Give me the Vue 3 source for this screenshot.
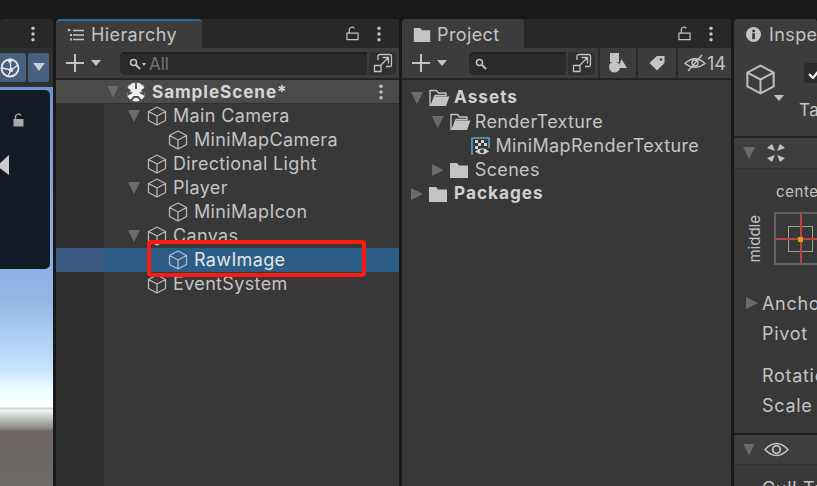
<script setup>
const hierarchy = [
  { name: 'Main Camera', depth: 1, open: true },
  { name: 'MiniMapCamera', depth: 2 },
  { name: 'Directional Light', depth: 1 },
  { name: 'Player', depth: 1, open: true },
  { name: 'MiniMapIcon', depth: 2 },
  { name: 'Canvas', depth: 1, open: true },
  { name: 'RawImage', depth: 2, selected: true },
  { name: 'EventSystem', depth: 1 },
]
const assets = [
  { name: 'Assets', depth: 0, icon: 'open', arrow: 'down', bold: true },
  { name: 'RenderTexture', depth: 1, icon: 'open', arrow: 'down' },
  { name: 'MiniMapRenderTexture', depth: 2, icon: 'tex' },
  { name: 'Scenes', depth: 1, icon: 'closed', arrow: 'right' },
  { name: 'Packages', depth: 0, icon: 'closed', arrow: 'right', bold: true },
]
const indent = (d) => ({ paddingLeft: `${51 + d * 21}px` })
const assetIndent = (d) => ({ paddingLeft: `${9 + d * 20.75}px` })
</script>

<template>
  <div class="editor">
    <svg class="defs" width="0" height="0">
      <symbol id="cube" viewBox="0 0 20 20">
        <path d="M10 1 18.5 5.5V14.5L10 19 1.5 14.5V5.5ZM1.5 5.5 10 10 18.5 5.5M10 10V19" fill="none" stroke="currentColor" stroke-width="1.3" stroke-linejoin="round" />
      </symbol>
      <symbol id="lock" viewBox="0 0 14 16">
        <path d="M3.5 7V4A3 3 0 0 1 9 2.5M1 7.5H13V14.5H1Z" fill="none" stroke="currentColor" stroke-width="1.3" />
      </symbol>
      <symbol id="dots" viewBox="0 0 4 16">
        <circle cx="2" cy="2.2" r="1.7" fill="currentColor" />
        <circle cx="2" cy="8" r="1.7" fill="currentColor" />
        <circle cx="2" cy="13.8" r="1.7" fill="currentColor" />
      </symbol>
      <symbol id="plus" viewBox="0 0 36 18">
        <path d="M9 0V18M0 9H18" fill="none" stroke="currentColor" stroke-width="2" />
        <path d="M25 6H35L30 12Z" fill="currentColor" />
      </symbol>
      <symbol id="mag" viewBox="0 0 12 12">
        <circle cx="4.5" cy="4.5" r="3" fill="none" stroke="currentColor" stroke-width="1.5" />
        <path d="M7 7 11 11" stroke="currentColor" stroke-width="2" />
      </symbol>
      <symbol id="scenevis" viewBox="0 0 20 20">
        <path d="M5 7V3A1.5 1.5 0 0 1 6.500 1.500H17A1.500 1.500 0 0 1 18.500 3V12A1.500 1.500 0 0 1 17 13.500H13M1.500 12.500H8V18.500H1.500ZM8 12 15 5M9.500 4.500H15.500V10.500" fill="none" stroke="currentColor" stroke-width="1.3" />
      </symbol>
      <symbol id="folderOpen" viewBox="0 0 21 18">
        <path d="M1 16.500V1.500H7.500L9.500 4H17V6.500H6L2.500 16Z" fill="none" stroke="currentColor" stroke-width="1.400" stroke-linejoin="round" />
        <path d="M5.500 7.500H20.500L17 17H1.500Z" fill="currentColor" />
      </symbol>
      <symbol id="folderClosed" viewBox="0 0 18 16">
        <path d="M0 1H7L9 3.500H18V16H0Z" fill="currentColor" />
      </symbol>
    </svg>

    <section class="scene">
      <header class="tabbar scene-tabbar">
        <svg class="dots"><use href="#dots" /></svg>
      </header>
      <div class="toolbar scene-toolbar">
        <span class="gizmo">
          <svg width="20" height="22" viewBox="0 0 20 22">
            <circle cx="10" cy="11" r="8.500" fill="none" stroke="#e6e6e6" stroke-width="1.800" />
            <path d="M2 11 11 13 18 8M10 3 11 13 8 19" fill="none" stroke="#e6e6e6" stroke-width="1.300" />
            <circle cx="10" cy="3.500" r="2.300" fill="#e6e6e6" />
            <circle cx="11" cy="13" r="2.200" fill="#e6e6e6" />
          </svg>
        </span>
        <span class="gizmo-arrow"></span>
      </div>
      <div class="view">
        <div class="minimap">
          <svg class="map-lock" width="11" height="14" viewBox="0 0 11 14">
            <path d="M2.500 6V3.500A3 3 0 0 1 8 2.500" fill="none" stroke="#a8a8a8" stroke-width="1.400" />
            <rect x="0.500" y="6" width="10" height="7.500" fill="#a8a8a8" />
          </svg>
          <span class="map-cone"></span>
        </div>
      </div>
    </section>

    <section class="hierarchy">
      <header class="tabbar">
        <div class="tab tab-active">
          <svg width="16" height="13" viewBox="0 0 16 13">
            <path d="M5 2.500H16M5 7H16M5 11.500H16" stroke="#c4c4c4" stroke-width="1.300" />
            <rect x="0" y="1" width="2.200" height="2.200" fill="#c4c4c4" />
            <rect x="2" y="6" width="2" height="2" fill="#c4c4c4" />
            <rect x="2" y="10.500" width="2" height="2" fill="#c4c4c4" />
          </svg>
          <span>Hierarchy</span>
        </div>
        <div class="tab-actions">
          <svg class="lock"><use href="#lock" /></svg>
          <svg class="dots"><use href="#dots" /></svg>
        </div>
      </header>
      <div class="toolbar">
        <svg class="plus"><use href="#plus" /></svg>
        <div class="search search-wide">
          <svg class="mag"><use href="#mag" /></svg>
          <i class="mag-caret"></i>
          <span>All</span>
        </div>
        <button class="visbtn"><svg width="20" height="20"><use href="#scenevis" /></svg></button>
      </div>
      <div class="tree">
        <div class="gutter"></div>
        <div class="scene-row">
          <span class="arrow down scene-arrow"></span>
          <svg class="unity" width="20" height="20" viewBox="0 0 20 20">
            <circle cx="10" cy="10" r="9.500" fill="#f0f0f0" />
            <path d="M10 0V7M1 13 6 10.500M19 13 14 10.500M5 19 8 15H12L15 19" fill="none" stroke="#4a4a4a" stroke-width="1.800" />
            <path d="M0 5 5 8 3 12 0 11ZM20 5 15 8 17 12 20 11Z" fill="#4a4a4a" />
          </svg>
          <span class="scene-name">SampleScene*</span>
          <svg class="dots scene-dots"><use href="#dots" /></svg>
        </div>
        <div
          v-for="item in hierarchy"
          :key="item.name"
          class="row"
          :class="{ selected: item.selected }"
          :style="indent(item.depth)"
        >
          <span class="arrow" :class="{ down: item.open }"></span>
          <svg class="cube"><use href="#cube" /></svg>
          <span class="label">{{ item.name }}</span>
        </div>
        <div class="highlight"></div>
      </div>
    </section>

    <section class="project">
      <header class="tabbar">
        <div class="tab project-tab">
          <svg width="18" height="15" viewBox="0 0 18 16"><use href="#folderClosed" /></svg>
          <span>Project</span>
        </div>
        <div class="tab-actions">
          <svg class="lock"><use href="#lock" /></svg>
          <svg class="dots"><use href="#dots" /></svg>
        </div>
      </header>
      <div class="toolbar">
        <svg class="plus"><use href="#plus" /></svg>
        <div class="search search-project">
          <svg class="mag"><use href="#mag" /></svg>
        </div>
        <button class="visbtn"><svg width="20" height="20"><use href="#scenevis" /></svg></button>
        <div class="filter">
          <svg width="18" height="20" viewBox="0 0 18 20">
            <rect x="1" y="0" width="9" height="9" fill="#c4c4c4" />
            <circle cx="5.500" cy="14" r="5.500" fill="#c4c4c4" />
            <path d="M12.500 6 18 15H9Z" fill="#c4c4c4" />
          </svg>
        </div>
        <div class="filter filter-tag">
          <svg width="16" height="16" viewBox="0 0 16 16">
            <path d="M8 1H15.500V8L8 15.500 0.500 8Z" fill="#c4c4c4" />
            <circle cx="12" cy="4.500" r="1.300" fill="#3c3c3c" />
          </svg>
        </div>
        <div class="filter hidden-count">
          <svg width="22" height="18" viewBox="0 0 22 18">
            <path d="M1 9.500Q11 0 21 9.500 11 17 1 9.500Z" fill="none" stroke="#c4c4c4" stroke-width="1.300" />
            <circle cx="11" cy="9" r="3" fill="none" stroke="#c4c4c4" stroke-width="1.300" />
            <path d="M4 17 18 1" stroke="#c4c4c4" stroke-width="1.400" />
          </svg>
          <span>14</span>
        </div>
      </div>
      <div class="assets">
        <div
          v-for="item in assets"
          :key="item.name"
          class="asset"
          :class="{ strong: item.bold }"
          :style="assetIndent(item.depth)"
        >
          <span class="arrow" :class="item.arrow"></span>
          <svg v-if="item.icon === 'open'" class="asset-icon" width="21" height="18"><use href="#folderOpen" /></svg>
          <svg v-else-if="item.icon === 'closed'" class="asset-icon" width="21" height="16" viewBox="0 0 21 16">
            <use href="#folderClosed" width="18" height="16" />
          </svg>
          <svg v-else class="asset-icon" width="21" height="20" viewBox="0 0 21 20">
            <path d="M1 19V2H18V12" fill="none" stroke="#58a6d6" stroke-width="1.500" />
            <path d="M4 4H7V7H4ZM10 4H13V7H10ZM7 7H10V10H7ZM13 7H16V10H13ZM4 10H7V13H4Z" fill="#d0d0d0" />
            <path d="M4 15.500Q11 9 18 15.500 11 21 4 15.500Z" fill="#d0d0d0" />
            <circle cx="11" cy="15.200" r="2" fill="#383838" />
          </svg>
          <span class="label">{{ item.name }}</span>
        </div>
      </div>
    </section>

    <section class="inspector">
      <header class="tabbar">
        <div class="tab inspector-tab">
          <svg width="15" height="15" viewBox="0 0 15 15">
            <circle cx="7.500" cy="7.500" r="7.500" fill="#c4c4c4" />
            <rect x="6.200" y="6.200" width="2.800" height="6" fill="#3c3c3c" />
            <rect x="6.200" y="2.800" width="2.800" height="2.400" fill="#3c3c3c" />
          </svg>
          <span>Inspector</span>
        </div>
      </header>
      <div class="object-head">
        <div class="object-icon">
          <svg class="big-cube"><use href="#cube" /></svg>
          <i class="small-caret"></i>
        </div>
        <div class="object-meta">
          <span class="check">
            <svg width="13" height="11" viewBox="0 0 13 11"><path d="M1 6 5 10 12 1" fill="none" stroke="#eee" stroke-width="2.200" /></svg>
          </span>
          <span class="tag-label">Tag</span>
        </div>
      </div>
      <div class="comp-head">
        <span class="arrow down"></span>
        <svg width="18" height="18" viewBox="0 0 18 18">
          <path d="M0 4 5 0 8 7ZM18 4 13 0 10 7ZM0 14 5 18 8 11ZM18 14 13 18 10 11Z" fill="#c4c4c4" />
        </svg>
      </div>
      <div class="rect-body">
        <div class="preset-top">center</div>
        <div class="preset">
          <span class="middle">middle</span>
          <div class="anchor-box">
            <div class="inner-box"></div>
            <div class="cross-h"></div>
            <div class="cross-v"></div>
            <div class="dot"></div>
          </div>
        </div>
        <div class="field anchors"><span class="arrow right"></span>Anchors</div>
        <div class="field pivot">Pivot</div>
        <div class="field rotation">Rotation</div>
        <div class="field scale">Scale</div>
      </div>
      <div class="comp-head eye-head">
        <span class="arrow down"></span>
        <svg width="25" height="17" viewBox="0 0 25 17">
          <path d="M1 8.500Q12.500 -3.500 24 8.500 12.500 20.500 1 8.500Z" fill="none" stroke="#c4c4c4" stroke-width="1.600" />
          <circle cx="12.500" cy="8.500" r="3.800" fill="none" stroke="#c4c4c4" stroke-width="1.800" />
        </svg>
      </div>
      <div class="field cull">Cull Transparent Mesh</div>
    </section>
  </div>
</template>

<style>
html, body { margin: 0; background: #191919; }
</style>

<style scoped>
.editor {
  width: 817px;
  height: 486px;
  display: flex;
  gap: 3px;
  overflow: hidden;
  background: #191919;
  padding-top: 19px;
  box-sizing: border-box;
  font-family: Inter, "Noto Sans", sans-serif;
  font-size: 18px;
  color: #c4c4c4;
}
.defs { position: absolute; }
section { display: flex; flex-direction: column; background: #383838; overflow: hidden; border-radius: 4px 4px 0 0; }
.scene { width: 53px; flex: none; background: #282828; }
.hierarchy { width: 343px; flex: none; }
.project { width: 329px; flex: none; }
.inspector { flex: 1; min-width: 0; }

.tabbar { height: 29px; flex: none; background: #282828; display: flex; justify-content: space-between; align-items: stretch; }
.tab { display: flex; align-items: center; gap: 7px; background: #3c3c3c; padding: 2px 0 0 12px; box-sizing: border-box; height: 29px; width: 122px; letter-spacing: .4px; border-radius: 4px 4px 0 0; white-space: nowrap; }
.tab svg { flex: none; }
.tab-active { width: 146px; border-top: 2px solid #2f6797; padding-top: 0; }
.project-tab { padding-left: 11px; gap: 6px; }
.tab-actions { display: flex; align-items: center; gap: 18px; padding-right: 18px; }
.lock { width: 13px; height: 15px; }
.dots { width: 4px; height: 16px; color: #c4c4c4; flex: none; }
.scene-tabbar { justify-content: flex-end; align-items: center; padding-right: 18px; }

.toolbar { height: 30px; flex: none; background: #3c3c3c; border-bottom: 2px solid #232323; display: flex; align-items: center; box-sizing: content-box; }
.plus { width: 36px; height: 18px; margin-left: 10px; flex: none; color: #c4c4c4; }
.search { height: 23px; box-sizing: border-box; background: #2a2a2a; border-radius: 5px 0 0 5px; border-top: 2px solid #202020; display: flex; align-items: center; color: #747474; font-size: 17px; flex: none; }
.search-wide { width: 247px; margin-left: 18px; padding-left: 9px; }
.search-project { width: 97px; margin-left: 21px; padding-left: 6px; }
.mag { width: 12px; height: 12px; color: #c4c4c4; }
.mag-caret { width: 0; height: 0; border: 2.5px solid transparent; border-top: 3px solid #c4c4c4; margin: 2px 3px 0 1px; }
.visbtn { width: 27px; height: 23px; padding: 0; margin-left: 2px; background: #2f2f2f; border: 0; border-radius: 0 5px 5px 0; color: #c4c4c4; display: flex; align-items: center; justify-content: center; flex: none; }
.filter { height: 30px; display: flex; align-items: center; justify-content: center; border-left: 2px solid #2a2a2a; color: #c4c4c4; flex: none; width: 38px; box-sizing: border-box; }
.search-project + .visbtn + .filter { margin-left: 3px; }
.filter-tag { width: 40px; }
.hidden-count { width: 55px; gap: 1px; justify-content: flex-start; padding-left: 6px; }

.scene-toolbar { height: 39px; justify-content: flex-end; gap: 2px; padding-right: 4px; border-bottom: 0; align-items: flex-start; padding-top: 5px; box-sizing: border-box; background: #303030; }
.gizmo { width: 26px; height: 29px; background: #46607d; border-radius: 0 2px 2px 0; display: flex; align-items: center; justify-content: flex-start; flex: none; }
.gizmo-arrow { width: 21px; height: 29px; background: #46607d; border-radius: 2px; flex: none; position: relative; }
.gizmo-arrow::after { content: ""; position: absolute; left: 4.500px; top: 10px; border: 6px solid transparent; border-top: 8px solid #c8cfd6; }
.view {
  flex: 1;
  position: relative;
  background: linear-gradient(
    #6d96d0 0, #93b6e6 213px, #c8e4fd 283px, #ecffff 303px, #fbfffd 320px,
    #cfd8d4 321px, #cfd8d4 322px, #f2f6f3 323px, #8b8b88 341px, #6d6663 344px, #6e6a66 100%
  );
}
.minimap { position: absolute; left: 0; top: 3px; width: 50px; height: 179px; box-sizing: border-box; background: #131b26; border-radius: 0 5px 5px 0; }
.map-lock { position: absolute; left: 13px; top: 23px; }
.map-cone { position: absolute; left: -3px; top: 65px; width: 12px; height: 20px; background: #ccc; clip-path: polygon(100% 0, 100% 100%, 0 55%); }

.tree { flex: 1; position: relative; }
.gutter { position: absolute; left: 0; top: 0; bottom: 0; width: 48px; background: #2f2f2f; }
.scene-row { height: 24px; background: #4a4a4a; display: flex; align-items: center; position: relative; padding-left: 51px; border-bottom: 1px solid #303030; box-sizing: border-box; font-weight: 700; color: #d6d6d6; }
.scene-arrow { margin-right: 9px; }
.unity { flex: none; }
.scene-name { margin: 0 0 0 6px; font-size: 17.2px; letter-spacing: .9px; }
.scene-dots { position: absolute; right: 16px; top: 4px; }
.row { height: 24px; display: flex; align-items: center; position: relative; letter-spacing: .35px; }
.row.selected { background: #2c5d87; color: #e4e4e4; }
.row.selected::before { content: ""; position: absolute; left: 0; top: 0; bottom: 0; width: 48px; background: #3a5a82; }
.row > * { position: relative; }
.arrow { display: inline-block; width: 12px; height: 12px; flex: none; margin-right: 7px; }
.arrow.down { background: #6b6b6b; clip-path: polygon(0 0, 100% 0, 50% 100%); }
.arrow.right { background: #6b6b6b; clip-path: polygon(0 0, 100% 50%, 0 100%); }
.cube { width: 20px; height: 20px; color: #b8b8b8; flex: none; margin-right: 6px; }
.label { white-space: nowrap; margin-bottom: 2px; }
.highlight { position: absolute; left: 91px; top: 160px; width: 219px; height: 37px; box-sizing: border-box; border: 4px solid #fb1a10; border-radius: 4px; }

.assets { flex: 1; padding-top: 6px; }
.asset { height: 24px; display: flex; align-items: center; letter-spacing: .35px; }
.asset .arrow { margin-right: 6px; }
.asset-icon { flex: none; margin-right: 4px; color: #c4c4c4; }
.strong { font-weight: 700; font-size: 17.2px; letter-spacing: 1px; color: #d0d0d0; }
.strong .label { margin-bottom: 4px; }

.inspector-tab { width: 84px; padding-left: 12px; gap: 8px; }
.object-head { height: 73px; flex: none; background: #3c3c3c; border-bottom: 2px solid #232323; display: flex; padding: 15px 0 0 11px; box-sizing: content-box; }
.object-icon { width: 46px; position: relative; flex: none; }
.big-cube { width: 31px; height: 33px; color: #bdbdbd; }
.small-caret { position: absolute; left: 29px; top: 32px; border: 5.5px solid transparent; border-top: 6px solid #c4c4c4; }
.object-meta { display: flex; flex-direction: column; align-items: flex-start; }
.check { width: 28px; height: 20px; margin-left: 13px; padding-left: 4px; box-sizing: border-box; background: #2a2a2a; border-radius: 3px; display: flex; align-items: center; margin-bottom: 17px; flex: none; }
.check svg { flex: none; }
.tag-label { margin-left: 8px; font-size: 17px; letter-spacing: .5px; }
.comp-head { height: 31px; flex: none; background: #3e3e3e; border-bottom: 1px solid #303030; box-sizing: border-box; display: flex; align-items: center; padding-left: 9px; }
.comp-head .arrow { margin-right: 12px; }
.rect-body { height: 266px; flex: none; border-bottom: 2px solid #1f1f1f; box-sizing: border-box; }
.preset-top { padding: 13px 0 0 42px; font-size: 15px; letter-spacing: .6px; line-height: 20px; }
.preset { display: flex; margin-top: 10px; align-items: center; }
.middle { writing-mode: vertical-rl; transform: rotate(180deg); font-size: 15px; margin-left: 13px; margin-right: 12px; line-height: 15px; }
.anchor-box { width: 60px; height: 53px; flex: none; border: 2px solid #626262; box-sizing: border-box; position: relative; }
.inner-box { position: absolute; left: 12px; top: 12px; width: 25px; height: 26px; box-sizing: border-box; border: 1.5px solid #9e9e9e; }
.cross-h { position: absolute; left: 0; right: 0; top: 24px; height: 2px; background: #b8414a; }
.cross-v { position: absolute; top: 0; bottom: 0; left: 24px; width: 1.5px; background: #b8414a; }
.dot { position: absolute; left: 22px; top: 23px; width: 5px; height: 5px; background: #dca000; }
.field { display: flex; align-items: center; height: 24px; padding-left: 28px; white-space: nowrap; letter-spacing: .7px; }
.field .arrow { margin-left: -16px; margin-right: 4px; }
.anchors { margin-top: 26px; }
.pivot { margin-top: 6px; }
.rotation { margin-top: 18px; }
.scale { margin-top: 6px; }
.eye-head { height: 30px; }
.eye-head .arrow { margin-right: 9px; }
.cull { margin-top: 13px; }
</style>
